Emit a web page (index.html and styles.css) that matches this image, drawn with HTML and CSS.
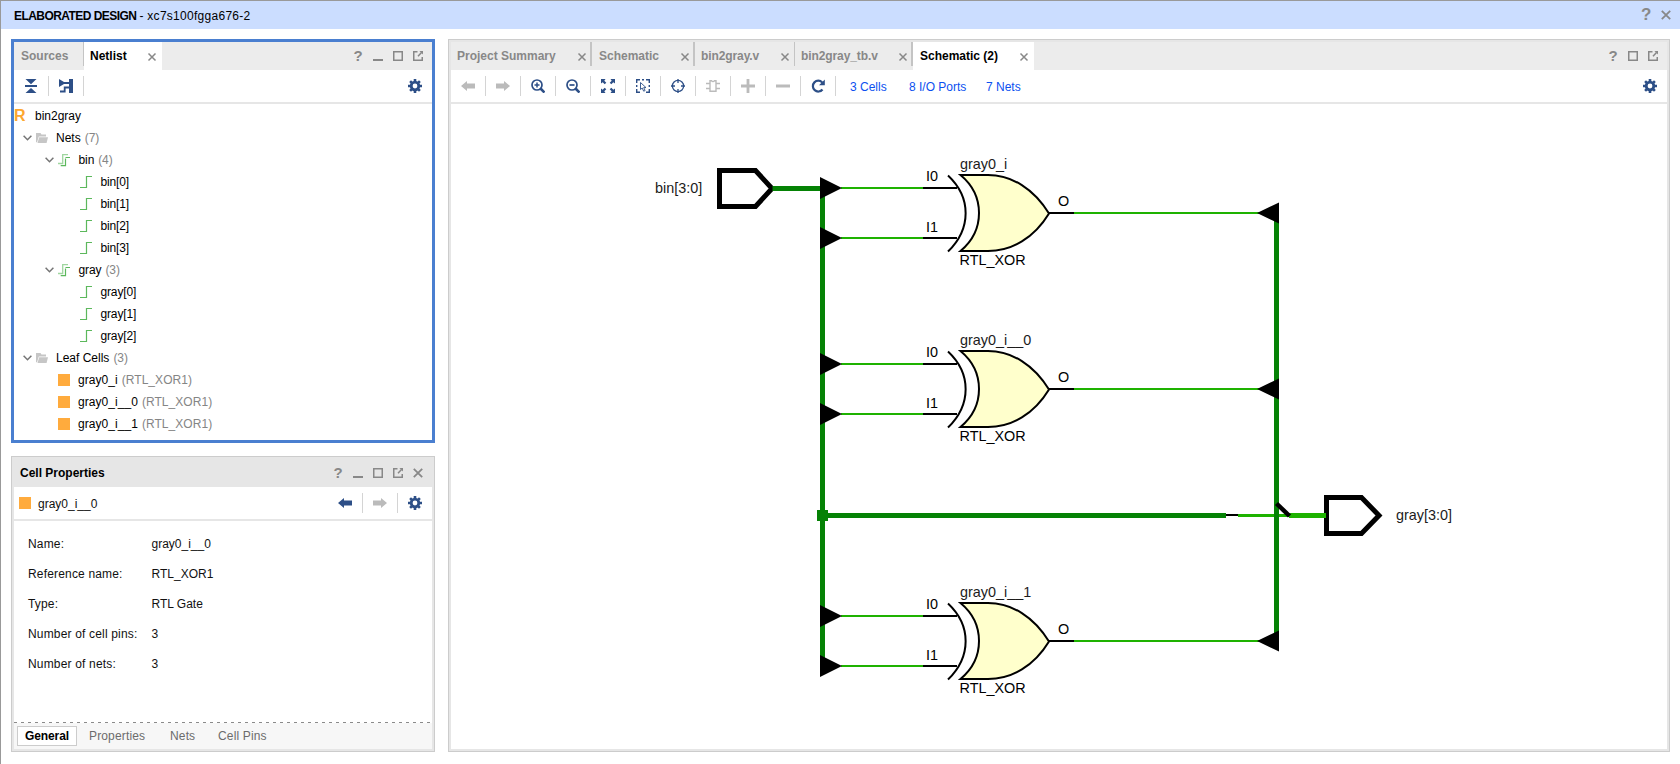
FILE: index.html
```html
<!DOCTYPE html>
<html lang="en">
<head>
<meta charset="utf-8">
<title>Elaborated Design</title>
<link rel="stylesheet" href="styles.css">
</head>
<body>
<svg class="defs" width="0" height="0">
  <defs>
    <symbol id="close" viewBox="0 0 10 10"><path d="M1.500 1.500l7 7M8.500 1.500l-7 7" stroke="currentColor" stroke-width="1.500" fill="none"/></symbol>
    <symbol id="min" viewBox="0 0 10 10"><path d="M0 9h10" stroke="currentColor" stroke-width="2"/></symbol>
    <symbol id="max" viewBox="0 0 10 10"><path d="M.75 .75h8.500v8.500h-8.500z" stroke="currentColor" stroke-width="1.500" fill="none"/></symbol>
    <symbol id="pop" viewBox="0 0 10 10"><path d="M4.500 .75H.75v8.500h8.500V6M5 5.300L8.500 1.500" stroke="currentColor" stroke-width="1.500" fill="none"/><path d="M6.400 0H10v3.600z" fill="currentColor"/></symbol>
    <symbol id="gear" viewBox="0 0 14 14"><circle cx="7" cy="7" r="3.800" fill="none" stroke="currentColor" stroke-width="2.800"/><path d="M7 0v2.500M7 11.500V14M0 7h2.500M11.500 7H14M2.100 2.100l1.700 1.700M10.200 10.200l1.700 1.700M11.900 2.100l-1.700 1.700M3.800 10.200l-1.700 1.700" stroke="currentColor" stroke-width="2.600"/></symbol>
    <symbol id="left" viewBox="0 0 14 10"><path d="M0 5l6-5v2.500h8v5H6V10z" fill="currentColor"/></symbol>
    <symbol id="right" viewBox="0 0 14 10"><path d="M14 5L8 0v2.500H0v5h8V10z" fill="currentColor"/></symbol>
    <symbol id="net" viewBox="0 0 12 13"><path d="M0 11.500h6.500V.5H12" fill="none" stroke="#5cb85c" stroke-width="1.200"/></symbol>
    <symbol id="bus" viewBox="0 0 12 13"><path d="M0 9.500h4.700V.6H10" fill="none" stroke="#9fd69f" stroke-width="1.300"/><path d="M2.700 11.600h4.800V4.500M7.500 3.500H12" fill="none" stroke="#5cb85c" stroke-width="1.200"/></symbol>
    <symbol id="chev" viewBox="0 0 9 6"><path d="M.6 .8l3.900 4 3.900-4" fill="none" stroke="#757575" stroke-width="1.500"/></symbol>
    <symbol id="folder" viewBox="0 0 12 10"><path d="M0 9V0h4.500l1 1.500H10v2H2.800L1 9.500z" fill="#c6c6c6"/><path d="M3.200 4.300H12L10.600 10H1.500z" fill="#c6c6c6"/></symbol>
    <symbol id="xor" viewBox="0 0 440 110" overflow="visible">
      <path d="M21 25H103M21 75H103M254 50H440" stroke="#1eb200" stroke-width="2"/>
      <path d="M0 14l22 11-22 11zM0 64l22 11-22 11zM459 39.500l-22 10.500 22 10.500z"/>
      <path d="M140.500 12h27.500c24 0 46 14 61 38.500c-15 24.500-37 37.500-61 37.500h-27.500c12-10 18.500-24 18.500-38s-6.500-28-18.500-38z" fill="#ffffcc" stroke="#000" stroke-width="2"/>
      <path d="M128 12.500c23.500 22 23.500 53 0 76M103 25h34M103 75h34M229 50h25" fill="none" stroke="#000" stroke-width="2"/>
      <text x="106" y="18">I0</text><text x="106" y="69">I1</text><text x="238" y="43">O</text><text x="139.500" y="102">RTL_XOR</text>
    </symbol>
  </defs>
</svg>
<div class="app">
  <header class="banner"><b>ELABORATED DESIGN</b><span class="part">- xc7s100fgga676-2</span>
    <span class="banner-tools"><i class="q big">?</i><svg class="x12"><use href="#close"/></svg></span></header>
  <main class="work">
    <aside class="side">
      <section class="panel netlist">
        <div class="tabbar">
          <div class="tab t-src">Sources</div>
          <div class="tab active t-net">Netlist<svg class="x10"><use href="#close"/></svg></div>
          <div class="wintools"><i class="q">?</i><svg><use href="#min"/></svg><svg><use href="#max"/></svg><svg><use href="#pop"/></svg></div>
        </div>
        <div class="toolbar">
          <span class="btn"><svg width="12" height="14" viewBox="0 0 12 14"><path d="M.5 0h11L6 5.200zM.5 14h11L6 9zM0 6h12v2H0z"/></svg></span>
          <span class="btn"><svg width="14" height="14" viewBox="0 0 14 14"><path d="M0 0l5 3h5V0h4v14h-4V5H5L0 8z"/><path d="M1 12.500h4.700V8.500H10" fill="none" stroke="currentColor" stroke-width="1.800"/></svg></span>
          <svg class="gear"><use href="#gear"/></svg>
        </div>
        <div class="tree">
          <div class="row l0"><b class="r">R</b>bin2gray</div>
          <div class="row l1"><svg class="chev"><use href="#chev"/></svg><svg class="folder"><use href="#folder"/></svg>Nets<em>(7)</em></div>
          <div class="row l2"><svg class="chev"><use href="#chev"/></svg><svg class="net"><use href="#bus"/></svg>bin<em>(4)</em></div>
          <div class="row l3"><svg class="net"><use href="#net"/></svg>bin[0]</div>
          <div class="row l3"><svg class="net"><use href="#net"/></svg>bin[1]</div>
          <div class="row l3"><svg class="net"><use href="#net"/></svg>bin[2]</div>
          <div class="row l3"><svg class="net"><use href="#net"/></svg>bin[3]</div>
          <div class="row l2"><svg class="chev"><use href="#chev"/></svg><svg class="net"><use href="#bus"/></svg>gray<em>(3)</em></div>
          <div class="row l3"><svg class="net"><use href="#net"/></svg>gray[0]</div>
          <div class="row l3"><svg class="net"><use href="#net"/></svg>gray[1]</div>
          <div class="row l3"><svg class="net"><use href="#net"/></svg>gray[2]</div>
          <div class="row l1"><svg class="chev"><use href="#chev"/></svg><svg class="folder"><use href="#folder"/></svg>Leaf Cells<em>(3)</em></div>
          <div class="row cell"><i class="sq"></i>gray0_i<em>(RTL_XOR1)</em></div>
          <div class="row cell"><i class="sq"></i>gray0_i__0<em>(RTL_XOR1)</em></div>
          <div class="row cell"><i class="sq"></i>gray0_i__1<em>(RTL_XOR1)</em></div>
        </div>
      </section>
      <section class="panel props">
        <div class="head"><b>Cell Properties</b><div class="wintools"><i class="q">?</i><svg><use href="#min"/></svg><svg><use href="#max"/></svg><svg><use href="#pop"/></svg><svg class="x12"><use href="#close"/></svg></div></div>
        <div class="toolbar ptool"><i class="sq"></i><span class="cellname">gray0_i__0</span>
          <span class="btn push"><svg class="arrow"><use href="#left"/></svg></span><span class="btn off"><svg class="arrow"><use href="#right"/></svg></span><svg class="gear"><use href="#gear"/></svg></div>
        <dl class="fields">
          <dt>Name:</dt><dd>gray0_i__0</dd>
          <dt>Reference name:</dt><dd>RTL_XOR1</dd>
          <dt>Type:</dt><dd>RTL Gate</dd>
          <dt>Number of cell pins:</dt><dd>3</dd>
          <dt>Number of nets:</dt><dd>3</dd>
        </dl>
        <svg class="dash" width="418" height="1"><path d="M0 .5H418" stroke="#8a8a8a" stroke-dasharray="3 4"/></svg>
        <nav class="subtabs"><b>General</b><span class="s1">Properties</span><span class="s2">Nets</span><span class="s3">Cell Pins</span></nav>
      </section>
    </aside>
    <section class="panel schem">
      <div class="tabbar">
        <div class="tab w1">Project Summary<svg class="x10"><use href="#close"/></svg></div>
        <div class="tab w2">Schematic<svg class="x10"><use href="#close"/></svg></div>
        <div class="tab w3">bin2gray.v<svg class="x10"><use href="#close"/></svg></div>
        <div class="tab w4">bin2gray_tb.v<svg class="x10"><use href="#close"/></svg></div>
        <div class="tab active w5">Schematic (2)<svg class="x10"><use href="#close"/></svg></div>
        <div class="wintools"><i class="q">?</i><svg><use href="#max"/></svg><svg><use href="#pop"/></svg></div>
      </div>
      <div class="toolbar">
        <span class="btn off"><svg class="arrow"><use href="#left"/></svg></span>
        <span class="btn off"><svg class="arrow"><use href="#right"/></svg></span>
        <span class="btn"><svg width="14" height="14" viewBox="0 0 14 14"><g fill="none" stroke="currentColor"><circle cx="6" cy="6" r="5" stroke-width="1.700"/><path d="M3.500 6h5M6 3.500v5" stroke-width="1.500"/><path d="M9.500 9.500l4 4" stroke-width="2.600"/></g></svg></span>
        <span class="btn"><svg width="14" height="14" viewBox="0 0 14 14"><g fill="none" stroke="currentColor"><circle cx="6" cy="6" r="5" stroke-width="1.700"/><path d="M3.500 6h5" stroke-width="1.700"/><path d="M9.500 9.500l4 4" stroke-width="2.600"/></g></svg></span>
        <span class="btn"><svg width="14" height="14" viewBox="0 0 14 14"><path d="M0 0h4.500L3.300 1.700l2 2-1.600 1.600-2-2L0 4.500zM14 0v4.500l-1.700-1.200-2 2-1.600-1.600 2-2L9.500 0zM0 14V9.500l1.700 1.200 2-2 1.600 1.600-2 2L4.500 14zM14 14H9.500l1.200-1.700-2-2 1.600-1.600 2 2L14 9.500z"/></svg></span>
        <span class="btn"><svg width="14" height="14" viewBox="0 0 14 14"><path d="M.7 4V.7H4M6 .7h2M10 .7h3.300V4M13.300 6v2M.7 6v2M.7 10v3.300H4M13.300 10v3.300H10" fill="none" stroke="currentColor" stroke-width="1.400"/><path d="M4.500 3.500v7l1.700-1.500 1.500 3.200 1.400-.7-1.400-2.900h2.300z" fill="#fff" stroke="currentColor" stroke-width=".9"/></svg></span>
        <span class="btn"><svg width="14" height="14" viewBox="0 0 14 14"><circle cx="7" cy="7" r="5.600" fill="none" stroke="currentColor" stroke-width="1.300"/><path d="M7 0v4M7 10v4M0 7h4M10 7h4" stroke="currentColor" stroke-width="1.300"/></svg></span>
        <span class="btn off"><svg width="14" height="14" viewBox="0 0 14 14"><path d="M4 1.700h1.500q1.500 1.800 3 0H10v10.600H4zM0 4.500h4M0 9.500h4M10 4.500h4M10 9.500h4" fill="none" stroke="currentColor" stroke-width="1.400"/></svg></span>
        <span class="btn off"><svg width="14" height="14" viewBox="0 0 14 14"><path d="M7 0v14M0 7h14" stroke="currentColor" stroke-width="2.800"/></svg></span>
        <span class="btn off"><svg width="14" height="14" viewBox="0 0 14 14"><path d="M0 7h14" stroke="currentColor" stroke-width="3"/></svg></span>
        <span class="btn"><svg width="14" height="14" viewBox="0 0 14 14"><path d="M11.500 10.500A5.400 5.400 0 1 1 11.200 3.400" fill="none" stroke="currentColor" stroke-width="2.200"/><path d="M13.800 .5v5.800H8z"/></svg></span>
        <a class="k1">3 Cells</a><a class="k2">8 I/O Ports</a><a class="k3">7 Nets</a>
        <svg class="gear"><use href="#gear"/></svg>
      </div>
      <svg class="canvas" width="1216" height="645" viewBox="451 104 1216 645">
        <path d="M719.500 170.500H755.500l16.500 18L755.500 206.500H719.500z" fill="#fff" stroke="#000" stroke-width="5"/>
        <path d="M1326.500 497.500H1361.500l17.500 18-17.500 18H1326.500z" fill="#fff" stroke="#000" stroke-width="5"/>
        <path d="M1238 515.500h51" stroke="#1eb200" stroke-width="3"/>
        <path d="M1289 515.500h37" stroke="#1eb200" stroke-width="5"/>
        <path d="M822.500 188V666M1276.500 213V641M825 515.500H1226M772.500 188.500H821" fill="none" stroke="#058205" stroke-width="5"/>
        <path d="M817 510h11v11h-11z" fill="#058205"/>
        <path d="M1226 515h12" stroke="#000" stroke-width="2"/>
        <path d="M1276.500 503.500l13 12.500" stroke="#000" stroke-width="4.500"/>
        <use href="#xor" x="820" y="163" width="440" height="110"/>
        <use href="#xor" x="820" y="339" width="440" height="110"/>
        <use href="#xor" x="820" y="591" width="440" height="110"/>
        <text x="655" y="193">bin[3:0]</text><text x="1396" y="520">gray[3:0]</text>
        <text x="960" y="169">gray0_i</text><text x="960" y="345">gray0_i__0</text><text x="960" y="597">gray0_i__1</text>
      </svg>
    </section>
  </main>
</div>
</body>
</html>
```
FILE: styles.css
```css
* { box-sizing: border-box; }
body { margin: 0; font: 12px "Liberation Sans", Arial, sans-serif; color: #111; background: #fff; }
svg { display: block; flex: none; color: inherit; fill: currentColor; }
.defs { position: absolute; }
i, em { font-style: normal; }
.app { width: 1680px; height: 764px; border-left: 1px solid #999; border-top: 1px solid #999; display: flex; flex-direction: column; overflow: hidden; }
.banner { height: 28px; background: #cbddff; display: flex; align-items: center; padding: 2px 8px 0 13px; color: #000; white-space: pre; }
.banner b { letter-spacing: -.55px; }
.part { margin-left: 3px; letter-spacing: .28px; }
.banner-tools { margin-left: auto; display: flex; align-items: center; gap: 9px; color: #888; padding-bottom: 2px; }
.x12 { width: 12px; height: 12px; }
.q { font-weight: bold; font-size: 15px; width: 10px; text-align: center; line-height: 12px; }
.q.big { font-size: 17px; line-height: 14px; }
.work { flex: 1; display: flex; gap: 13px; padding: 10px 9px 11px 10px; }
.side { width: 424px; display: flex; flex-direction: column; gap: 13px; }
.panel { display: flex; flex-direction: column; background: #fff; }
.netlist { height: 404px; border: 3px solid #4a7fd0; }
.props, .schem { border: 1px solid #ccc; box-shadow: inset 0 0 0 2px #e6e6e6; padding: 2px; }
.props { height: 296px; }
.schem { width: 1222px; height: 713px; }
.tabbar { height: 28px; background: #ececec; display: flex; flex: none; }
.tab { height: 24px; color: #888; font-weight: bold; display: flex; align-items: center; padding: 4px 4px 0 6px; border-right: 2px solid #c4c4c4; white-space: nowrap; }
.tab.active { height: 28px; padding-bottom: 0; align-items: flex-start; padding-top: 7px; color: #000; background: #fff; border: 0; }
.tab .x10 { width: 10px; height: 10px; margin-left: auto; margin-top: 2px; color: #888; }
.tab.active .x10 { margin-top: 3px; }
.t-src { width: 70px; padding-left: 7px; border-right-width: 1px; }
.t-net { width: 78px; padding-right: 5px; }
.w1 { width: 141px; padding-right: 3px; }
.w2 { width: 103px; padding-left: 7px; padding-right: 3px; }
.w3 { width: 100px; padding-right: 4px; border-right-width: 1px; letter-spacing: -.1px; }
.w4 { width: 118px; padding-right: 3px; letter-spacing: -.1px; }
.w5 { width: 121px; padding: 7px 5px 0 7px; }
.wintools { margin-left: auto; display: flex; align-items: center; gap: 10px; padding-right: 9px; color: #888; }
.wintools svg { width: 10px; height: 10px; }
.wintools svg.x12 { width: 12px; height: 12px; margin: 0 -1px; }
.toolbar { height: 34px; flex: none; border-bottom: 2px solid #e6e6e6; display: flex; align-items: center; color: #2d4f87; }
.btn { width: 35px; height: 20px; border-right: 1px solid #d4d4d4; display: flex; align-items: center; justify-content: center; }
.off { color: #bbb; }
.arrow { width: 14px; height: 10px; }
.gear { width: 14px; height: 14px; margin: 0 10px 0 auto; }
.toolbar a { color: #0b50f0; padding-top: 1px; }
.k1 { margin-left: 14px; width: 59px; }
.k2 { width: 77px; }
.tree { padding-top: 1px; }
.row { height: 22px; display: flex; align-items: center; color: #000; white-space: nowrap; }
.row em { color: #858585; margin-left: 4px; }
.row .r { color: #fda730; font-size: 16px; width: 21px; line-height: 20px; }
.row .r::first-letter { letter-spacing: 0; }
.l1 { padding-left: 9px; }
.l2 { padding-left: 31px; letter-spacing: -.1px; }
.l3 { padding-left: 66px; letter-spacing: -.15px; }
.cell { padding-left: 44px; letter-spacing: .05px; }
.chev { width: 9px; height: 6px; margin-right: 4px; }
.folder { width: 12px; height: 10px; margin-right: 8px; }
.net { width: 12px; height: 13px; margin-right: 8.500px; }
.sq { width: 12px; height: 12px; margin-right: 8px; background: #ffab3d; flex: none; }
.head { height: 28px; background: #e6e6e6; display: flex; align-items: center; padding-left: 6px; color: #000; flex: none; }
.ptool { padding-left: 5px; }
.ptool .sq { margin-right: 7px; }
.cellname { color: #111; padding-top: 1px; }
.push { margin-left: auto; }
.ptool .gear { margin-left: 10px; }
.fields { margin: 8px 0 0; padding-left: 14px; display: grid; grid-template-columns: 123.500px 1fr; grid-auto-rows: 30px; align-items: center; flex: 1; }
.fields dt { letter-spacing: .17px; }
.fields dd { margin: 0; }
.dash { flex: none; }
.subtabs { height: 26px; flex: none; background: #f7f7f7; display: flex; align-items: center; padding: 0 0 0 3px; color: #6c6c6c; }
.subtabs b { width: 60px; height: 20px; border: 1px solid #ccc; background: #fff; color: #000; display: flex; align-items: center; justify-content: center; letter-spacing: -.1px; }
.s1 { margin-left: 12px; width: 81px; letter-spacing: .15px; }
.s2 { width: 48px; letter-spacing: .15px; }
.s3 { letter-spacing: .15px; }
.canvas { font-size: 14.400px; fill: #000; shape-rendering: auto; }
.canvas text { fill: #1c1c1c; stroke: none; }
```
